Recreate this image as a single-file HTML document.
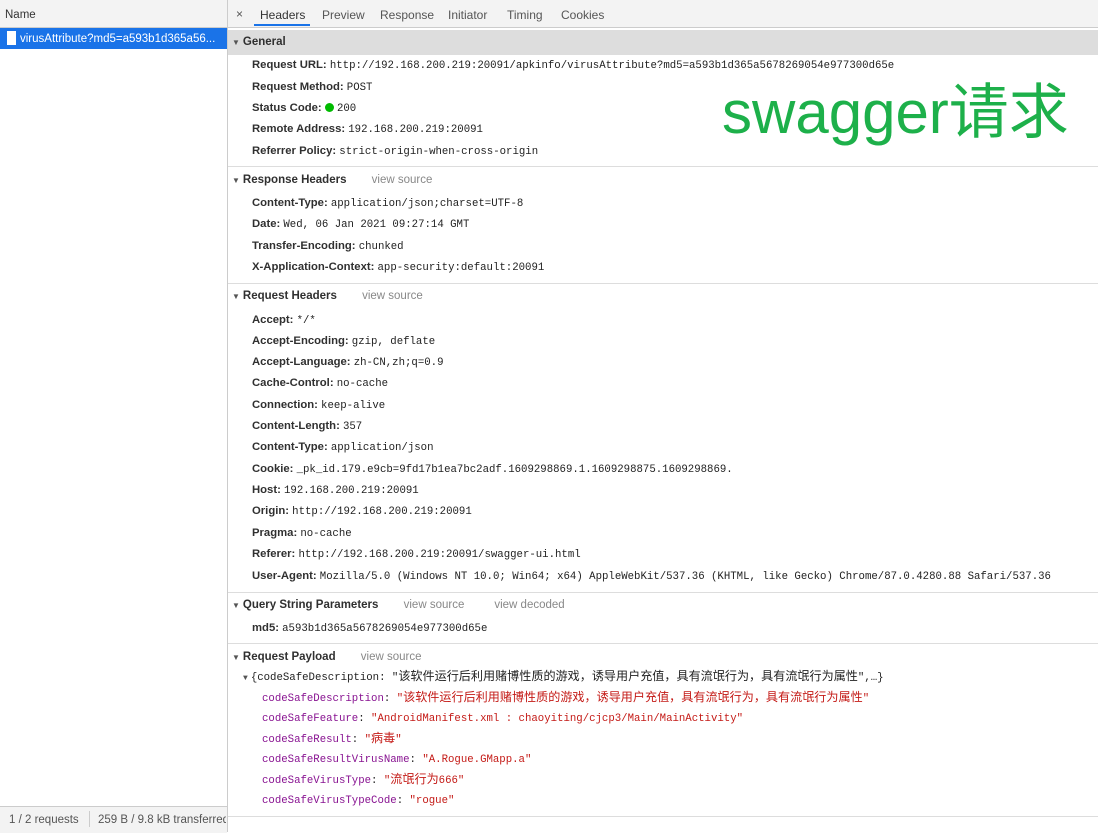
<!DOCTYPE html><html><head><meta charset="utf-8"><style>
body{margin:0;width:1098px;height:832px;position:relative;overflow:hidden;background:#fff;font-family:"Liberation Sans","Noto Sans CJK SC",sans-serif;font-size:12px;color:#333}
.a{position:absolute;white-space:nowrap;line-height:16px}
.l{font-weight:bold;font-size:11.3px;color:#303030}
.m{font-family:"Liberation Mono","Noto Sans CJK SC",monospace;font-size:10.7px;font-weight:normal;color:#222}
.h{font-weight:bold;font-size:11.5px;color:#303030}
.vs{color:#888;font-size:11.5px}
.sep{position:absolute;left:228px;right:0;height:1px;background:#ddd}
.k{color:#881391}.s{color:#c41a16}
.c{font-family:"Noto Sans CJK SC",sans-serif;font-size:12.1px;line-height:0}
.tri{font-size:8px;color:#555;margin-right:3px}
</style></head><body>
<div style="position:absolute;left:0;top:0;width:227px;height:832px;border-right:1px solid #ccc"></div>
<div style="position:absolute;left:0;top:0;width:227px;height:27px;background:#f3f3f3;border-bottom:1px solid #ccc"></div>
<div class="a" style="left:5px;top:7px;font-size:11.5px">Name</div>
<div style="position:absolute;left:0;top:28px;width:227px;height:21px;background:#1a73e8"></div>
<div style="position:absolute;left:7px;top:31px;width:9px;height:14px;background:#fff"></div>
<div class="a" style="left:20px;top:31px;color:#fff;font-size:11.5px">virusAttribute?md5=a593b1d365a56...</div>
<div style="position:absolute;left:0;top:806px;width:227px;height:26px;background:#f3f3f3;border-top:1px solid #ccc"></div>
<div class="a" style="left:9px;top:812px;color:#555;font-size:11.5px">1 / 2 requests</div>
<div style="position:absolute;left:89px;top:811px;width:1px;height:16px;background:#ccc"></div>
<div class="a" style="left:98px;top:812px;color:#555;font-size:11.5px;width:128px;overflow:hidden">259 B / 9.8 kB transferred</div>
<div style="position:absolute;left:228px;top:0;right:0;height:27px;background:#f3f3f3;border-bottom:1px solid #ccc"></div>
<div class="a" style="left:236px;top:6px;color:#555">×</div>
<div class="a" style="left:260px;top:7px;color:#333">Headers</div>
<div style="position:absolute;left:254px;top:24px;width:56px;height:2px;background:#1a73e8"></div>
<div class="a" style="left:322px;top:7px;color:#555">Preview</div>
<div class="a" style="left:380px;top:7px;color:#555">Response</div>
<div class="a" style="left:448px;top:7px;color:#555">Initiator</div>
<div class="a" style="left:507px;top:7px;color:#555">Timing</div>
<div class="a" style="left:561px;top:7px;color:#555">Cookies</div>
<div style="position:absolute;left:228px;top:30px;right:0;height:25px;background:#ddd"></div>
<div class="a h" style="left:232px;top:34px"><span class="tri">▼</span>General</div>
<div class="a l" style="left:252px;top:57px">Request URL: <span class="m">http://192.168.200.219:20091/apkinfo/virusAttribute?md5=a593b1d365a5678269054e977300d65e</span></div>
<div class="a l" style="left:252px;top:79px">Request Method: <span class="m">POST</span></div>
<div class="a l" style="left:252px;top:100px">Status Code: <span style="display:inline-block;width:9px;height:9px;border-radius:50%;background:#0b0;vertical-align:-1px"></span> <span class="m">200</span></div>
<div class="a l" style="left:252px;top:121px">Remote Address: <span class="m">192.168.200.219:20091</span></div>
<div class="a l" style="left:252px;top:143px">Referrer Policy: <span class="m">strict-origin-when-cross-origin</span></div>
<div class="a" style="left:722px;top:79px;font-size:60px;line-height:68px;color:#1db04a;font-family:'Liberation Sans','Noto Sans CJK SC',sans-serif">swagger请求</div>
<div class="sep" style="top:166px"></div>
<div class="a h" style="left:232px;top:172px"><span class="tri">▼</span>Response Headers <span class="vs" style="font-weight:normal;margin-left:22px">view source</span></div>
<div class="a l" style="left:252px;top:195px">Content-Type: <span class="m">application/json;charset=UTF-8</span></div>
<div class="a l" style="left:252px;top:216px">Date: <span class="m">Wed, 06 Jan 2021 09:27:14 GMT</span></div>
<div class="a l" style="left:252px;top:238px">Transfer-Encoding: <span class="m">chunked</span></div>
<div class="a l" style="left:252px;top:259px">X-Application-Context: <span class="m">app-security:default:20091</span></div>
<div class="sep" style="top:283px"></div>
<div class="a h" style="left:232px;top:288px"><span class="tri">▼</span>Request Headers <span class="vs" style="font-weight:normal;margin-left:22px">view source</span></div>
<div class="a l" style="left:252px;top:312px">Accept: <span class="m">*/*</span></div>
<div class="a l" style="left:252px;top:333px">Accept-Encoding: <span class="m">gzip, deflate</span></div>
<div class="a l" style="left:252px;top:354px">Accept-Language: <span class="m">zh-CN,zh;q=0.9</span></div>
<div class="a l" style="left:252px;top:375px">Cache-Control: <span class="m">no-cache</span></div>
<div class="a l" style="left:252px;top:397px">Connection: <span class="m">keep-alive</span></div>
<div class="a l" style="left:252px;top:418px">Content-Length: <span class="m">357</span></div>
<div class="a l" style="left:252px;top:439px">Content-Type: <span class="m">application/json</span></div>
<div class="a l" style="left:252px;top:461px">Cookie: <span class="m">_pk_id.179.e9cb=9fd17b1ea7bc2adf.1609298869.1.1609298875.1609298869.</span></div>
<div class="a l" style="left:252px;top:482px">Host: <span class="m">192.168.200.219:20091</span></div>
<div class="a l" style="left:252px;top:503px">Origin: <span class="m">http://192.168.200.219:20091</span></div>
<div class="a l" style="left:252px;top:525px">Pragma: <span class="m">no-cache</span></div>
<div class="a l" style="left:252px;top:546px">Referer: <span class="m">http://192.168.200.219:20091/swagger-ui.html</span></div>
<div class="a l" style="left:252px;top:568px">User-Agent: <span class="m">Mozilla/5.0 (Windows NT 10.0; Win64; x64) AppleWebKit/537.36 (KHTML, like Gecko) Chrome/87.0.4280.88 Safari/537.36</span></div>
<div class="sep" style="top:592px"></div>
<div class="a h" style="left:232px;top:597px"><span class="tri">▼</span>Query String Parameters <span class="vs" style="font-weight:normal;margin-left:22px">view source</span><span class="vs" style="font-weight:normal;margin-left:30px">view decoded</span></div>
<div class="a l" style="left:252px;top:620px">md5: <span class="m">a593b1d365a5678269054e977300d65e</span></div>
<div class="sep" style="top:643px"></div>
<div class="a h" style="left:232px;top:649px"><span class="tri">▼</span>Request Payload <span class="vs" style="font-weight:normal;margin-left:22px">view source</span></div>
<div class="a m" style="left:243px;top:670px"><span class="tri">▼</span>{codeSafeDescription: "<span class="c">该软件运行后利用赌博性质的游戏，诱导用户充值，具有流氓行为，具有流氓行为属性</span>",…}</div>
<div class="a m" style="left:262px;top:691px"><span class="k">codeSafeDescription</span>: <span class="s">"<span class="c">该软件运行后利用赌博性质的游戏，诱导用户充值，具有流氓行为，具有流氓行为属性</span>"</span></div>
<div class="a m" style="left:262px;top:711px"><span class="k">codeSafeFeature</span>: <span class="s">"AndroidManifest.xml : chaoyiting/cjcp3/Main/MainActivity"</span></div>
<div class="a m" style="left:262px;top:732px"><span class="k">codeSafeResult</span>: <span class="s">"<span class="c">病毒</span>"</span></div>
<div class="a m" style="left:262px;top:752px"><span class="k">codeSafeResultVirusName</span>: <span class="s">"A.Rogue.GMapp.a"</span></div>
<div class="a m" style="left:262px;top:773px"><span class="k">codeSafeVirusType</span>: <span class="s">"<span class="c">流氓行为</span>666"</span></div>
<div class="a m" style="left:262px;top:793px"><span class="k">codeSafeVirusTypeCode</span>: <span class="s">"rogue"</span></div>
<div class="sep" style="top:816px"></div>
</body></html>
